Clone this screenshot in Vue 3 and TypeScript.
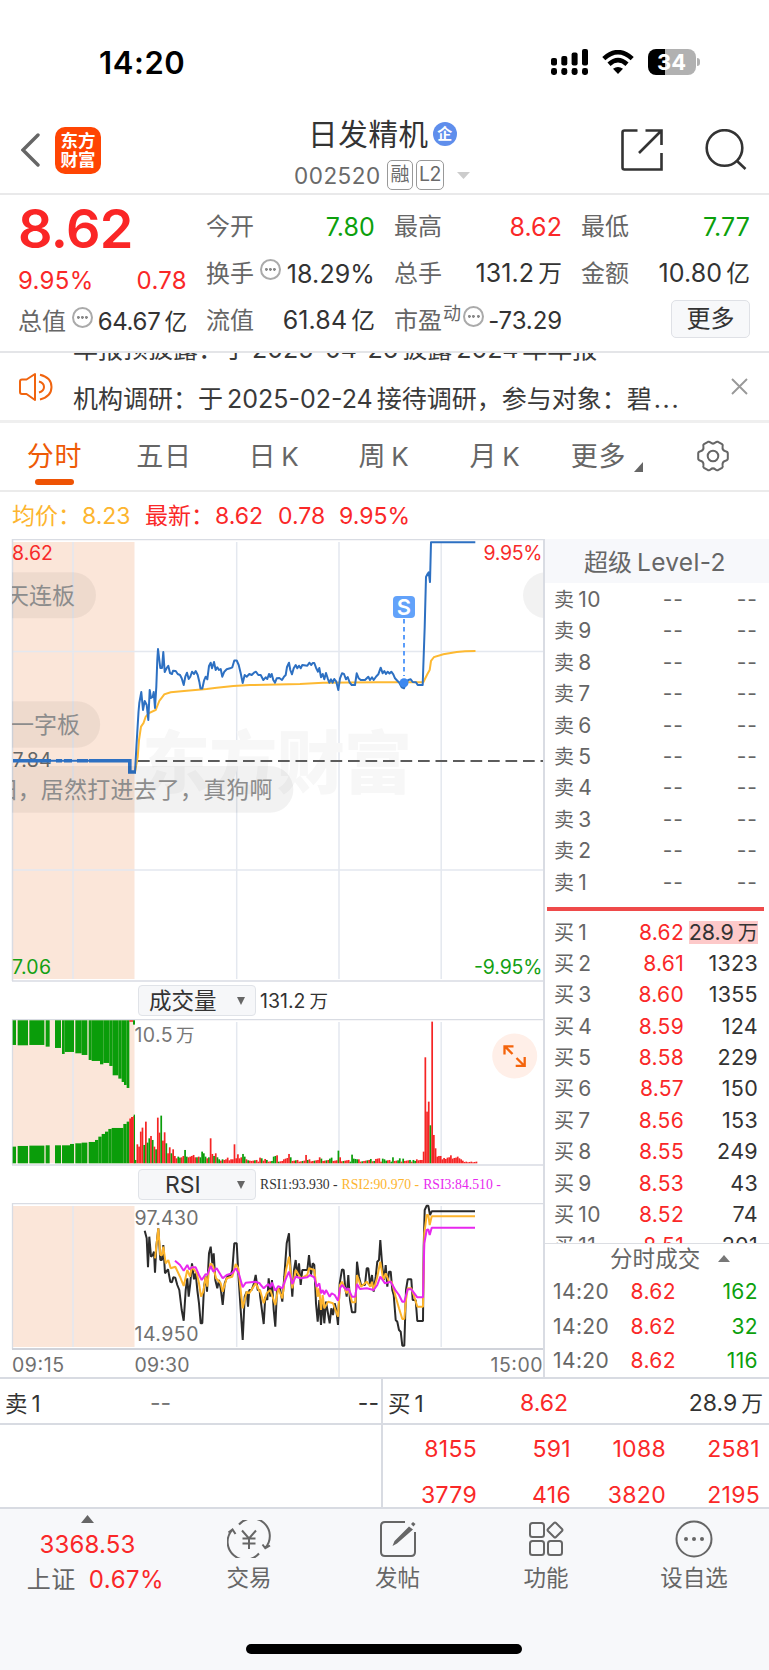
<script setup lang="ts">
type Pt = [number, number]

// Series are plotted on a grid of thirds of a pixel.
const line = (src: string, dx = 0, dy = 0): string =>
  src
    .trim()
    .split(/\s+/)
    .map((p) => p.split(',').map(Number) as Pt)
    .map(([x, y]) => `${(x / 3 + dx).toFixed(1)},${(y / 3 + dy).toFixed(1)}`)
    .join(' ')

const priceLine =
  '135,772 136.5,745 138.5,712 139.3,703 141.3,692 143,710 144.7,701 146.7,705 148.3,720 149.7,690 151,698 152.7,697 153.7,692 155,708 156.3,687 157.3,660 158,649 160.3,668 162,668 163.3,652 164.7,672 166.7,668 168.3,665.7 170,673 172,674 173,670.7 175.7,671 177.7,674 180,675 181.7,678.3 183.7,685 185.3,676.7 187,672.7 188.7,679 190.3,676.7 192,671.7 194,674 195.7,671 197.7,675 199.3,681.7 200.5,688.5 202.3,688.5 204,680.7 205.7,676.7 207.3,679.3 209,666 210.7,662.7 212,668.3 214,662 215.7,670 217.3,667.3 219,670 220.7,669 222.3,676.7 224.3,671.7 226.7,669.3 230,668.3 232.3,667.3 234.3,660.5 236.7,660.5 238.7,665 240.7,673.3 242.7,683 244.7,675 246.7,676.7 249.3,674 251.7,675 254,672.7 256,671.7 258.3,675 260.7,675 263.3,680 265.7,677.3 267.3,679 269,674 270.3,677 271.7,674 273.3,680 275,682.7 276.7,678.3 279.3,678 282,680 284,676.7 285.7,675 287,667 289,662.7 290.3,670 292,674.3 293.7,668.3 295.7,665 297.3,668.3 299,665.7 300.7,668.3 302.3,665 307.3,665.7 309.3,662.7 311.3,665 312.7,663 314.3,663 316,667.7 318,671.7 319.3,668 321,677.3 322.7,674 324.3,679.3 326,673 327.7,678.3 329.3,682.7 331,679.3 332.7,682.7 334.3,679 336.3,681.7 338.3,690 340,678.3 342,673.3 344,674 346,679.3 347.7,677 349.7,682.7 351.7,685 355,685 356.7,673.3 358.7,678.3 360.7,680 365,680 368.3,676.7 370,680 372,677.3 373.7,680 376,676.7 378.3,674.3 380.7,667.7 382.7,673.3 384.3,671 386,674 387.7,671.7 389.5,673.5 391.3,671.7 393.3,674.3 395,678.3 397.3,680.7 399.3,682.7 401.7,687.3 404,688.3 406,682.7 408.3,680 410.7,679.3 412.7,682 416,682.3 417.7,685 422.7,685 423.3,667 424.7,627 426,577 427.5,574 428.7,572.3 430,582 431,542.3 475.3,542.3'

const averageLine =
  '135,772 137.7,757 139,740 141,726.7 143.5,723 145.7,716.7 149,713 155.7,710 159.3,701 164.3,694.3 170.7,692.3 186.7,690.7 206.7,689 216.7,687.7 233.3,686 250,685 300,684 323,682.7 376.7,682.3 423.3,682.3 427.3,674.3 429.7,670 431,661 434,657 443.3,654.3 456.7,652 465,651.3 475.5,651'

const rsi1 = [
  line('434,752 440,775 444,862 448,770 453,830 458,825 462,815 465,878 469,800 475,745 481,840 486,840 490,795 495,880 504,868 511,905 516,907 520,892 526,893 532,915 538,930 545,990 551,1022 557,930 562,895 566,950 571,910 576,850 582,898 587,880 592,930 597,970 602,1030 607,1030 612,920 617,890 621,935 627,820 632,800 637,850 641,820 646,900 652,925 657,900 662,925 668,975 674,910 682,890 692,885 697,870 703,790 710,790 715,880 722,990 728,1080 734,950 740,935 744,980 748,930 755,930 762,910 767,885 773,930 779,930', 0, 980),
  line('0,945 5,985 11,1032 16,950 22,960 26,895 31,950 36,900 41,990 46,1040 51,930 60,925 67,965 73,890 80,790 87,760 92,880 97,950 102,870 107,840 112,890 117,850 122,915 127,870 142,870 147,825 153,885 158,850 163,855 168,970 173,1025 178,960 183,1035 188,960 193,1030 198,965 204,1000 209,1030 214,985 219,1005 224,970 229,990 234,1035 239,910 246,868 251,870 256,925 260,950 265,885 270,960 276,997 286,997 291,845 297,890 303,915 315,915 320,865 325,865 331,920 336,885 341,935 347,890 352,845 357,840 361,780 367,860 372,900 377,855 382,920 387,875 392,875 397,930 401,945 407,1020 412,1025 417,1050 422,1055 427,1097 433,1097 438,930 443,898 454,898 458,960 467,960 472,1023 489,1023 491,800 494,690 500,677 505,677 510,705 515,694 645,694', 260, 980)
].join(' ')

const rsi2 = [
  line('465,835 470,790 475,745 481,825 486,825 490,800 497,850 505,840 512,865 526,860 540,890 551,918 562,870 570,890 576,860 590,880 597,910 603,950 610,935 617,890 622,920 627,870 632,850 640,860 648,895 662,910 668,935 680,895 697,890 707,852 715,865 728,985 740,935 748,940 767,910 779,935', 0, 980),
  line('0,930 11,970 20,940 31,930 46,975 55,925 67,955 78,870 87,830 97,925 107,870 122,895 142,885 147,865 163,870 173,950 178,925 183,990 188,945 193,985 204,965 219,970 234,1010 240,915 246,905 260,940 266,925 276,967 286,967 291,885 303,920 320,905 331,920 336,905 341,930 352,890 361,845 370,900 377,880 387,905 395,905 407,950 417,985 427,1017 433,1017 438,960 443,925 454,925 463,950 472,980 489,980 493,760 500,705 505,705 509,735 515,709 645,709', 260, 980)
].join(' ')

const rsi3 = [
  line('525,842 540,855 551,872 562,855 568,868 576,862 587,862 597,885 605,900 617,882 622,885 632,858 640,875 650,865 668,895 680,885 697,880 707,865 716,880 728,922 737,908 767,905 779,910', 0, 980),
  line('0,912 11,925 25,912 31,922 36,908 46,932 55,918 67,925 78,895 87,875 97,912 107,890 122,895 142,892 150,885 163,892 170,920 178,910 183,940 188,930 193,943 198,930 209,950 215,940 224,945 234,962 240,925 246,915 260,930 265,925 276,950 286,950 291,912 300,927 320,925 341,930 352,915 361,890 375,910 392,905 407,932 417,945 427,965 433,965 443,928 454,928 463,940 472,952 489,952 493,790 500,750 505,748 509,765 515,743 645,743', 260, 980)
].join(' ')

// Minute volumes: height plus direction, one entry per minute from 09:30.
const opening =
  '10g 57r 50r 95r 107r 55g 125r 62g 75g 82r 70g 50r 42g 137r 92r 143g 68r 93r 60g 30r 48r 30g 42r 22r 15r 20g 17g 18r 22r 40g 20g 18r 20r 22r 25r 18r 18g 20r 18g 35g 30g 20g 15r 18g 75r 28r 22g 30r 18g 12g 8r 12g 10r 12r 17r 9r 12r 12r 57r 15r 27r 15r 18r 28g 20g 12r 9g 8r'.split(' ')
const spikes: Record<number, string> = {
  73: '17r', 74: '15g', 76: '13r', 81: '20g', 82: '22g', 83: '24r', 87: '12r', 88: '14r', 89: '16r', 90: '28r', 91: '18g', 100: '25r', 102: '12r',
  108: '18r', 109: '14g', 114: '14g', 115: '17g', 119: '38g', 120: '18r', 127: '26g', 128: '14g', 129: '13g', 130: '12g', 131: '12r', 138: '13g',
  141: '13r', 142: '14r', 143: '15r', 145: '14g', 146: '12g', 151: '18g', 155: '15g', 157: '14g', 163: '10g', 165: '12r', 168: '10r', 169: '35r',
  170: '318r', 171: '155r', 172: '185r', 173: '114g', 174: '425r', 175: '85r', 176: '45r', 177: '20r', 178: '22r', 179: '22r', 180: '12r',
  181: '16r', 182: '13r', 183: '17r', 184: '18r', 185: '24r', 186: '14r', 187: '16r', 188: '17r', 189: '20r', 190: '15r', 191: '12r', 192: '8r'
}
const volumes = Array.from({ length: 201 }, (_, i) => {
  const quiet = i > 192 ? `${3 + (i % 3)}r` : `${5 + ((i * 7) % 6)}${(i * 5) % 7 < 2 ? 'g' : 'r'}`
  const v = opening[i] ?? spikes[i] ?? quiet
  return { x: 134.8 + i * 1.704, h: parseInt(v) / 3, up: v.endsWith('r') }
})

// Call auction: [from, to, height] in thirds of a pixel.
const auctionTop = [
  [38, 48, 77], [53, 84, 78], [88, 133, 77], [137, 149, 82], [165, 183, 86], [186, 194, 104], [194, 222, 98], [226, 245, 102], [245, 262, 107],
  [266, 275, 122], [275, 300, 125], [300, 310, 135], [310, 328, 131], [328, 338, 140], [338, 355, 168], [355, 365, 178], [365, 372, 188], [372, 380, 197], [380, 388, 206], [399, 405, 16]
]
const auctionBottom = [
  [38, 48, 50], [53, 84, 52], [88, 133, 53], [137, 149, 54], [165, 183, 54], [186, 210, 54], [210, 222, 58], [226, 245, 60], [245, 262, 62],
  [266, 285, 64], [285, 295, 70], [295, 305, 80], [305, 315, 88], [315, 325, 95], [325, 335, 103], [335, 370, 106], [370, 380, 118], [380, 388, 125], [401, 405, 146]
]

const sells = [10, 9, 8, 7, 6, 5, 4, 3, 2, 1]
const buys = [
  ['1', '8.62', '28.9万'], ['2', '8.61', '1323'], ['3', '8.60', '1355'], ['4', '8.59', '124'], ['5', '8.58', '229'], ['6', '8.57', '150'],
  ['7', '8.56', '153'], ['8', '8.55', '249'], ['9', '8.53', '43'], ['10', '8.52', '74'], ['11', '8.51', '201']
]
const ticks = ['162', '32', '116']
const queue = [['8155', '591', '1088', '2581'], ['3779', '416', '3820', '2195']]
const tabs = ['日K', '周K', '月K']
</script>

<template>
  <div class="app">
    <div class="status">
      <span class="clock">14:20</span>
      <div class="status-icons">
        <svg width="37" height="26" viewBox="0 0 37 26">
          <rect x="0" y="9" width="6" height="7.5" rx="2" /><rect x="10.3" y="7" width="6" height="9.5" rx="2" />
          <rect x="20.6" y="3.5" width="6" height="13" rx="2" /><rect x="31" y="0" width="6" height="16.5" rx="2" />
          <rect v-for="x in [0, 10.3, 20.6, 31]" :key="x" :x="x" y="19" width="6" height="7" rx="2.4" />
        </svg>
        <svg class="wifi" width="32" height="24" viewBox="0 0 32 24">
          <path d="M1.8 8.6Q16-4.2 30.2 8.6M7 14.2Q16 6 25 14.2" fill="none" stroke="#000" stroke-width="4.6" />
          <path d="M16 24l-5-5.2q5-3.6 10 0z" />
        </svg>
        <div class="battery"><span>34</span></div>
        <i class="tip"></i>
      </div>
    </div>

    <header class="head">
      <div class="head-left">
        <svg width="19" height="34" viewBox="0 0 19 34"><path d="M17 2L2 17 17 32" fill="none" stroke="#666" stroke-width="3.4" stroke-linecap="round" /></svg>
        <div class="logo"><span>东方</span><span>财富</span></div>
      </div>
      <div class="head-mid">
        <div class="name">日发精机<b>企</b></div>
        <div class="code"><span>002520</span><i>融</i><i class="l2">L2</i>
          <svg width="13" height="7" viewBox="0 0 13 7"><path d="M0 0h13L6.500 7z" fill="#ccc" /></svg>
        </div>
      </div>
      <div class="head-right">
        <svg width="42" height="42" viewBox="0 0 42 42" fill="none" stroke="#333" stroke-width="2.6">
          <path d="M16.500 1.500H3.500Q1.500 1.500 1.500 3.500V38.500Q1.500 40.500 3.500 40.500H40.500V24M24.500 1.500H40.500V16M40 2L18 24" />
        </svg>
        <svg width="42" height="42" viewBox="0 0 42 42" fill="none" stroke="#333" stroke-width="2.6">
          <circle cx="19.500" cy="19" r="17.800" /><path d="M31.500 31.500l9 8.500" />
        </svg>
      </div>
    </header>

    <section class="quote">
      <div class="main-quote">
        <div class="big">8.62</div>
        <div class="cell red"><span>9.95%</span><span>0.78</span></div>
        <div class="cell"><label>总值</label><i class="dots"></i><span class="tight">64.67<em>亿</em></span></div>
      </div>
      <div class="quote-grid">
        <div class="cell"><label>今开</label><span class="green">7.80</span></div>
        <div class="cell"><label>最高</label><span class="red">8.62</span></div>
        <div class="cell"><label>最低</label><span class="green">7.77</span></div>
        <div class="cell"><label>换手</label><i class="dots"></i><span class="tight">18.29%</span></div>
        <div class="cell"><label>总手</label><span>131.2<em>万</em></span></div>
        <div class="cell"><label>金额</label><span>10.80<em>亿</em></span></div>
        <div class="cell"><label>流值</label><span>61.84<em>亿</em></span></div>
        <div class="cell"><label>市盈</label><sup>动</sup><i class="dots"></i><span class="tight pe">-73.29</span></div>
        <div class="cell end"><button>更多</button></div>
      </div>
    </section>

    <section class="news">
      <svg class="horn" width="34" height="30" viewBox="0 0 34 30" fill="none" stroke="#f0640f" stroke-width="2" stroke-linejoin="round">
        <path d="M16 2v26L7.500 22H3q-2 0-2-2V9.500q0-2 2-2h4.500z" /><path d="M20 9.500q5 1.500 5 5.500t-5 5.500M21 2.800Q32.500 5.500 32.500 15T21 27.500" />
      </svg>
      <div class="news-text">
        <p>年报预披露：于<u>2025-04-26</u>披露<u>2024</u>年年报</p>
        <p>机构调研：于<u>2025-02-24</u>接待调研，参与对象：碧<span class="more">...</span></p>
      </div>
      <svg width="17" height="17" viewBox="0 0 17 17"><path d="M1 1l15 15M16 1L1 16" stroke="#999" stroke-width="1.900" /></svg>
    </section>

    <nav class="tabs">
      <span class="on">分时</span>
      <span>五日</span>
      <span v-for="t in tabs" :key="t">{{ t[0] }}<u>{{ t[1] }}</u></span>
      <span>更多<svg width="9" height="10" viewBox="0 0 9 10"><path d="M9 0v10H0z" fill="#666" /></svg></span>
      <svg class="gear" width="32" height="32" viewBox="0 0 32 32" fill="none" stroke="#666" stroke-width="2">
        <circle cx="16" cy="16" r="5.300" />
        <path d="M11 1.800Q12.500 1.300 13.500 2.600Q16 4.700 18.500 2.600Q19.500 1.300 21 1.800L25 4.100Q26.200 5 25.600 6.600Q25 10.300 28.600 11.300Q30.800 11.700 30.800 13.500V18.500Q30.800 20.300 28.600 20.700Q25 21.700 25.600 25.400Q26.200 27 25 27.900L21 30.200Q19.500 30.700 18.500 29.400Q16 27.300 13.500 29.400Q12.500 30.700 11 30.200L7 27.900Q5.800 27 6.400 25.400Q7 21.700 3.400 20.700Q1.200 20.300 1.200 18.500V13.500Q1.200 11.700 3.400 11.300Q7 10.300 6.400 6.600Q5.800 5 7 4.100z" />
      </svg>
    </nav>

    <div class="legend">
      <span class="gold">均价：</span><span class="gold v1">8.23</span><span class="red">最新：</span><span class="red v2">8.62</span>
      <span class="red v3">0.78</span><span class="red">9.95%</span>
    </div>

    <div class="body">
      <div class="charts">
        <svg class="chart" width="543" height="443" viewBox="0 539 543 443">
          <rect x="12.500" y="542" width="122" height="437" fill="#fbe6d9" />
          <g stroke="#e4e8ef" stroke-width="1.500">
            <path d="M73 542V979M236.700 542V979M339 542V979M441.200 542V979M12 651.500H544M12 870H544" />
          </g>
          <path d="M12.500 981V539.500H544M12 981H544" fill="none" stroke="#d9dce3" stroke-width="1.500" />
          <text class="mark" x="142" y="788" textLength="270">东方财富</text>
          <path d="M138 761H544" stroke="#5c5c5c" stroke-width="2" stroke-dasharray="11.700 5.800" />
          <text x="12.500" y="767" font-size="19.500" textLength="39" fill="#666">7.84</text>
          <polyline :points="averageLine" fill="none" stroke="#fdb932" stroke-width="2" />
          <path d="M13 760.700H129.800V772H135" fill="none" stroke="#2d70c2" stroke-width="2" />
          <path d="M13 760.700H51M56 760.700H62M64 760.700H72M77 760.700H88M89 760.700H129.800V772H136" fill="none" stroke="#2d70c2" stroke-width="3.600" />
          <polyline :points="priceLine" fill="none" stroke="#2d70c2" stroke-width="2" stroke-linejoin="round" />
          <path d="M404 619V676" stroke="#5b9dfa" stroke-width="2" stroke-dasharray="4.500 3.500" />
          <circle cx="404" cy="682.700" r="4.500" fill="#3b87f0" />
          <rect x="393" y="596" width="22" height="22" rx="4" fill="#62a2fa" />
          <text x="404" y="614.500" font-size="22" font-weight="600" fill="#fff" text-anchor="middle">S</text>
          <g fill="#000" fill-opacity=".05">
            <path d="M12 572.300H73a23 23 0 0 1 0 46H12zM546 572.300a23 23 0 0 0 0 46zM12 701.300H77a23 23 0 0 1 0 46.400H12zM12 766H270a23 23 0 0 1 0 46.800H12z" />
          </g>
          <svg x="12" y="540" width="530" height="300" viewBox="12 540 530 300">
            <g fill="#8c8c8c" font-size="23" text-anchor="end">
              <text x="75" y="604" textLength="69">天连板</text>
              <text x="80" y="733" textLength="69">一字板</text>
              <text x="272.500" y="798" textLength="278">旧，居然打进去了，真狗啊</text>
            </g>
          </svg>
          <text x="12" y="559.500" font-size="19.500" textLength="41" fill="#f82a2a">8.62</text>
          <text x="542.500" y="559.500" font-size="19.500" textLength="59" text-anchor="end" fill="#f82a2a">9.95%</text>
          <text x="12" y="974" font-size="19.500" textLength="39" fill="#13a013">7.06</text>
          <text x="542.500" y="974" font-size="19.500" textLength="68.500" text-anchor="end" fill="#13a013">-9.95%</text>
        </svg>

        <div class="indicator">
          <div class="pick">成交量<svg width="8" height="8" viewBox="0 0 8 8"><path d="M0 0h8L4 8z" /></svg></div>
          <span class="total">131.2<em>万</em></span>
        </div>
        <svg class="chart" width="543" height="147" viewBox="0 1019 543 147">
          <rect x="12.500" y="1020" width="122" height="143.300" fill="#fbe6d9" />
          <path d="M73 1022V1163M236.700 1022V1163M339 1022V1163M441.200 1022V1163" stroke="#e4e8ef" stroke-width="1.500" />
          <path d="M12.500 1165V1019.500H544M12 1165H544" fill="none" stroke="#d9dce3" stroke-width="1.300" />
          <g fill="#0a9d0a">
            <rect v-for="b in auctionTop" :key="'t' + b[0]" :x="b[0] / 3" y="1020.300" :width="(b[1] - b[0]) / 3" :height="b[2] / 3 - 1" />
            <rect v-for="b in auctionBottom" :key="'b' + b[0]" :x="b[0] / 3" :y="1163.300 - b[2] / 3" :width="(b[1] - b[0]) / 3" :height="b[2] / 3" />
          </g>
          <path d="M129.300 1020.300h3.700v1.400h-3.700zM129.300 1163.300V1118.500h1.700V1117h2v-1h.800V1163.300z" fill="#f52525" />
          <rect v-for="(v, i) in volumes" :key="i" :x="v.x" :y="1163.300 - v.h" width="1.720" :height="v.h" :fill="v.up ? '#f52525' : '#0a9d0a'" />
          <text x="134.500" y="1041.500" font-size="19.500" fill="#777" textLength="38">10.5</text>
          <text x="176" y="1041.500" font-size="18.500" fill="#777">万</text>
          <circle cx="514.700" cy="1056" r="22.500" fill="#ffefe8" />
          <path d="M512.500 1054L505 1046.500M504.500 1054.500V1046.300H513.500M516.500 1058L524 1065.500M524.700 1057V1065.800H515.700" fill="none" stroke="#f4640c" stroke-width="2.300" />
        </svg>

        <div class="indicator">
          <div class="pick rsi">RSI<svg width="8" height="8" viewBox="0 0 8 8"><path d="M0 0h8L4 8z" /></svg></div>
          <div class="rsi-values"><span>RSI1:93.930 -</span><span class="gold">RSI2:90.970 -</span><span class="pink">RSI3:84.510 -</span></div>
        </div>
        <svg class="chart" width="543" height="174" viewBox="0 1203 543 174">
          <rect x="12.500" y="1206" width="122" height="141" fill="#fbe6d9" />
          <path d="M73 1206V1347M236.700 1206V1347M339 1206V1378M441.200 1206V1347" stroke="#e4e8ef" stroke-width="1.500" />
          <path d="M12.500 1349V1203.500H544" fill="none" stroke="#d9dce3" stroke-width="1.300" />
          <path d="M12 1349H544" stroke="#d0d3da" stroke-width="2" />
          <g fill="none" stroke-width="2" stroke-linejoin="bevel">
            <polyline :points="rsi1" stroke="#2b2b2b" />
            <polyline :points="rsi2" stroke="#fdb42c" />
            <polyline :points="rsi3" stroke="#e728ee" />
          </g>
          <g font-size="19.500" fill="#707070">
            <text x="134.500" y="1225" textLength="64">97.430</text>
            <text x="134.500" y="1340.500" textLength="64">14.950</text>
            <text x="12" y="1371.500" textLength="52">09:15</text>
            <text x="134.500" y="1371.500" textLength="55">09:30</text>
            <text x="542.500" y="1371.500" textLength="52" text-anchor="end">15:00</text>
          </g>
        </svg>
      </div>

      <aside class="book">
        <div class="book-title">超级<u>Level-2</u></div>
        <div class="rows">
          <div v-for="n in sells" :key="n" class="row"><label>卖<u>{{ n }}</u></label><span class="p none">--</span><span class="none">--</span></div>
        </div>
        <div class="split"></div>
        <div class="rows buys">
          <div v-for="b in buys" :key="b[0]" class="row" :class="{ first: b[0] === '1' }">
            <label>买<u>{{ b[0] }}</u></label><span class="p red">{{ b[1] }}</span><span class="q"><template v-if="b[0] === '1'">28.9<em>万</em></template><template v-else>{{ b[2] }}</template></span>
          </div>
        </div>
        <div class="ticks">
          <div class="ticks-title">分时成交<svg width="12" height="7" viewBox="0 0 12 7"><path d="M6 0l6 7H0z" fill="#777" /></svg></div>
          <div v-for="t in ticks" :key="t" class="tick"><span>14:20</span><span class="red">8.62</span><span class="green">{{ t }}</span></div>
        </div>
      </aside>
    </div>

    <section class="depth">
      <div class="side">
        <div class="best"><span class="lbl">卖<u>1</u></span><span class="price grey">--</span><span>--</span></div>
      </div>
      <div class="side buy">
        <div class="best"><span class="lbl">买<u>1</u></span><span class="price red">8.62</span><span>28.9<em>万</em></span></div>
        <div v-for="(r, i) in queue" :key="i" class="orders"><span v-for="v in r" :key="v">{{ v }}</span></div>
      </div>
    </section>

    <footer class="foot">
      <div class="index">
        <svg width="13" height="8" viewBox="0 0 13 8"><path d="M6.500 0L13 8H0z" fill="#666" /></svg>
        <div class="red">3368.53</div>
        <div class="sh"><label>上证</label><span class="red">0.67%</span></div>
      </div>
      <div class="item">
        <svg width="44" height="38" viewBox="0 0 44 38" fill="none" stroke="#666" stroke-width="2">
          <path d="M12 4.500A17.500 17.500 0 0 1 38.500 27.500M32 33.500A17.500 17.500 0 0 1 5 10M1.500 12.500L5.500 9.500 8.500 14M35.500 24.500L38.300 28.300 43 25.500M15 10.500l7 8 7-8M22 18.500V29M15.500 18.500h13M15.500 23.500h13" />
        </svg><span>交易</span>
      </div>
      <div class="item">
        <svg width="38" height="38" viewBox="0 0 38 38" fill="none" stroke="#666" stroke-width="2">
          <path d="M26 2H6Q2 2 2 6V32Q2 36 6 36H32Q36 36 36 32V12" />
          <path d="M30 6.500l4 3L18 23.500l-4.500 2.500 2-5zM32 4l2-2 2.500 2-2 2.500z" fill="#666" stroke="none" />
        </svg><span>发帖</span>
      </div>
      <div class="item">
        <svg width="36" height="38" viewBox="0 0 36 38" fill="none" stroke="#666" stroke-width="2">
          <rect x="2" y="3" width="14" height="14" rx="2.500" /><rect x="2" y="21" width="14" height="14" rx="2.500" /><rect x="20" y="21" width="14" height="14" rx="2.500" />
          <path d="M26 3q1-1 2 0l6 6q1 1 0 2l-6 6q-1 1-2 0l-6-6q-1-1 0-2z" />
        </svg><span>功能</span>
      </div>
      <div class="item">
        <svg width="38" height="38" viewBox="0 0 38 38" fill="none" stroke="#666" stroke-width="2">
          <circle cx="19" cy="19" r="17.500" /><g fill="#666" stroke="none"><circle cx="11" cy="19" r="2" /><circle cx="19" cy="19" r="2" /><circle cx="27" cy="19" r="2" /></g>
        </svg><span>设自选</span>
      </div>
      <div class="home"></div>
    </footer>
  </div>
</template>

<style>
body { background: #fff; }
</style>

<style scoped>
* { box-sizing: border-box; }
.app {
  width: 769px; height: 1670px; overflow: hidden; background: #fff; color: #333;
  font-family: Inter, "Noto Sans CJK SC", sans-serif; font-size: 24px;
}
svg { display: block; flex: none; }
svg text { font-family: Inter, "Noto Sans CJK SC", sans-serif; }
u, i, em { text-decoration: none; font-style: normal; }
em { margin-left: 4px; font-size: .95em; }
.red { color: #fa2828; }
.green { color: #0ca00c; }
.gold { color: #fdb52f; }
.pink { color: #e728ee; }
.grey { color: #777; }

.status { height: 106px; display: flex; justify-content: space-between; padding: 0 69px 0 99px; }
.clock { font-size: 31px; font-weight: 600; color: #000; line-height: 40px; margin-top: 43px; letter-spacing: .6px; }
.status-icons { display: flex; align-items: flex-start; padding-top: 49px; }
.wifi { margin: 1px 14px 0 14px; }
.battery {
  width: 48px; height: 26px; border-radius: 8px; color: #fff; font-size: 22px; font-weight: 700;
  line-height: 27px; text-align: center; background: linear-gradient(90deg, #000 17px, #b1b1b1 17px);
}
.tip { width: 3px; height: 8px; margin: 9px 0 0 1.500px; background: #b1b1b1; border-radius: 0 3px 3px 0; }

.head { height: 89px; display: grid; grid-template-columns: 250px 1fr 250px; border-bottom: 2px solid #e9e9ea; }
.head-left { display: flex; align-items: center; padding: 0 0 0 21px; gap: 15px; height: 88px; }
.logo {
  width: 46px; height: 47px; border-radius: 10px; background: #ff4503; color: #fff; font-size: 17.500px; font-weight: 700;
  line-height: 19.500px; display: flex; flex-direction: column; align-items: center; justify-content: center;
}
.head-mid { padding-left: 44px; }
.name { margin: 8px 0 0 14px; font-size: 29.500px; line-height: 40px; height: 40px; display: flex; align-items: center; letter-spacing: .7px; white-space: nowrap; }
.name b {
  width: 24px; height: 24px; margin-left: 4px; border-radius: 50%; background: #5f8eec; color: #fff; font-size: 15px;
  line-height: 23px; text-align: center; letter-spacing: 0;
}
.code { display: flex; align-items: center; height: 32px; margin-top: 5px; color: #6a6a6a; font-size: 22.500px; }
.code span { letter-spacing: .5px; width: 93px; }
.code i { width: 26px; height: 30px; border: 1.500px solid #999; border-radius: 5px; font-size: 19px; line-height: 27px; text-align: center; }
.code i.l2 { width: 28px; margin-left: 3px; font-size: 19.500px; letter-spacing: -.5px; }
.code svg { margin-left: 13px; }
.head-right { display: flex; justify-content: flex-end; gap: 42px; padding: 23px 24px 0 0; }
.head-right svg:last-child { margin-right: -2px; }

.quote { height: 158px; display: flex; padding-left: 18px; border-bottom: 2px solid #e4e5e8; }
.main-quote { width: 169px; margin-right: 19px; }
.big { height: 66px; font-size: 54px; line-height: 68px; font-weight: 600; color: #fa2626; letter-spacing: -.6px; }
.cell { display: flex; justify-content: space-between; align-items: center; height: 47px; font-size: 25px; white-space: nowrap; line-height: 30px; letter-spacing: .1px; }
.main-quote .cell { height: 39px; font-size: 24px; letter-spacing: .3px; }
.main-quote .cell:last-child { height: 43px; letter-spacing: -.3px; }
.cell label { font-size: 24px; color: #666; letter-spacing: 0; }
.quote-grid { display: grid; grid-template-columns: 169px 168px 169px; column-gap: 19px; grid-auto-rows: 47px; margin-top: 8px; }
.dots {
  width: 21px; height: 21px; margin: -8px 0 0 6px; border: 2px solid #aaa; border-radius: 50%; flex: none;
  background: radial-gradient(circle at 50% 50%, #888 1.100px, transparent 1.700px) center / 4.800px 4.800px no-repeat,
    radial-gradient(circle at 50% 50%, #888 1.100px, transparent 1.700px) 2px center / 4.800px 4.800px no-repeat,
    radial-gradient(circle at 50% 50%, #888 1.100px, transparent 1.700px) 10.400px center / 4.800px 4.800px no-repeat;
}
.tight { margin-left: auto; }
.pe { font-size: 24px; letter-spacing: -.1px; }
sup { font-size: 18px; line-height: 20px; margin: -14px 0 0 1px; color: #666; }
sup + .dots { margin-left: 2px; }
.end { justify-content: flex-end; }
button {
  width: 79px; height: 38px; padding: 0; border: 1.500px solid #dfe1e6; border-radius: 5px; background: #f7f8fa;
  color: #333; font: 24px/34px Inter, "Noto Sans CJK SC", sans-serif; margin-top: -3px;
}

.news { height: 70px; display: flex; border-bottom: 3px solid #efefef; padding-left: 19px; overflow: hidden; }
.horn { margin: 19px 20px 0 0; }
.news-text { width: 640px; margin-right: 18px; height: 67px; overflow: hidden; font-size: 25px; color: #3a3a3a; white-space: nowrap; }
.news-text p { margin: 0; height: 50px; line-height: 50px; }
.news-text p:first-child { margin-top: -29px; }
.news-text u { margin: 0 4px; }
.more { letter-spacing: 1.700px; margin-left: 2px; }
.news > svg:last-child { margin-top: 25px; }

.tabs { height: 69px; display: grid; grid-template-columns: 109px 110px 110px 110px 112px 112px 1fr; border-bottom: 2px solid #ebebeb; color: #666; font-size: 27px; line-height: 68px; }
.tabs > span { display: flex; justify-content: center; align-items: center; position: relative; letter-spacing: .8px; }
.tabs u { margin-left: 5px; font-size: 26px; }
.tabs > span svg { margin: 19px 0 0 8px; }
.on { color: #ee5a06; }
.on::after { content: ""; position: absolute; left: 35px; top: 56px; width: 39px; height: 6px; border-radius: 3px; background: #ee5304; }
.gear { margin: 17px 0 0 34px; }

.legend { height: 47px; padding-left: 12px; display: flex; align-items: center; font-size: 23px; line-height: 30px; white-space: nowrap; padding-top: 1px; }
.legend .gold:first-child { width: 70px; }
.v1 { width: 63px; }
.legend > :nth-child(3) { width: 70px; }
.v2 { width: 63px; }
.v3 { width: 61px; }

.body { display: flex; height: 838px; }
.charts { width: 543px; flex: none; }
.mark { font-size: 68px; font-weight: 900; fill: #f7f7f7; }
.indicator { height: 37px; display: flex; align-items: center; padding-left: 138px; }
.pick {
  width: 118px; height: 31px; border: 1.500px solid #e0e3e8; border-radius: 4px; background: #f6f7f9; font-size: 22.500px;
  line-height: 28px; display: flex; align-items: center; justify-content: space-between; padding: 0 10px;
}
.pick.rsi { padding-left: 26px; font-size: 23px; }
.pick svg { fill: #666; }
.total { margin-left: 4px; font-size: 19.500px; line-height: 24px; }
.rsi-values { display: flex; gap: 4px; margin-left: 4px; font: 13.700px/20px "Liberation Serif", serif; white-space: nowrap; }

.book { width: 226px; border-left: 2px solid #d9dce3; height: 838px; display: flex; flex-direction: column; }
.book-title { height: 44px; background: #f7f8fb; color: #666; font-size: 24px; line-height: 47px; padding-left: 39px; }
.book-title u { margin-left: 5px; font-size: 24.500px; letter-spacing: .3px; }
.rows { height: 314px; padding: 1px 11px 0 9px; overflow: hidden; font-size: 21px; letter-spacing: .3px; color: #666; }
.row { display: grid; grid-template-columns: 70px 60px 1fr; height: 31.400px; line-height: 31.400px; text-align: right; white-space: nowrap; }
.row label { text-align: left; font-size: 20px; }
.row u { margin-left: 4px; font-size: 21px; }
.none { letter-spacing: 1px; }
.split { height: 4px; flex: none; width: 217px; margin: 10px 0 0 2px; background: #ef4a4a; }
.buys { height: 333px; flex: none; padding-top: 5.500px; border-bottom: 1px solid #dcdee3; }
.q { color: #333; font-size: 21.500px; }
.first .q { justify-self: end; background: #fdc9c9; height: 23px; line-height: 23px; margin-top: 4px; letter-spacing: -.1px; }
.ticks { flex: 1; overflow: hidden; color: #666; font-size: 21px; letter-spacing: .4px; }
.ticks-title { display: flex; align-items: center; height: 31px; padding-left: 65px; font-size: 22.500px; line-height: 28px; padding-bottom: 2px; letter-spacing: .1px; }
.ticks-title svg { margin-left: 18px; }
.tick { display: grid; grid-template-columns: 60px 63px 1fr; height: 34.500px; line-height: 34.500px; text-align: right; padding: 0 11px 0 8px; }
.tick span:first-child { text-align: left; }

.depth { height: 132px; display: flex; border-top: 2px solid #d8dbe2; border-bottom: 2px solid #d8dbe2; overflow: hidden; font-size: 23px; }
.side { width: 381px; flex: none; }
.side.buy { width: 388px; border-left: 2px solid #d8dbe2; }
.best { height: 46px; border-bottom: 2px solid #d8dbe2; display: grid; grid-template-columns: 60px 1fr 100px; line-height: 49px; padding: 0 2px 0 5px; text-align: right; white-space: nowrap; }
.buy .best { padding-right: 6px; }
.lbl { text-align: left; font-size: 22.500px; }
.lbl u { margin-left: 4px; }
.price { text-align: left; padding-left: 85px; }
.buy .price { padding-left: 72px; }
.orders { display: grid; grid-template-columns: 94px 94px 95px 94px; height: 46px; line-height: 49px; text-align: right; color: #fa2828; letter-spacing: .3px; }

.foot { height: 161px; background: #f7f8fa; display: grid; grid-template-columns: 175px 148px 149px 148px 148px; grid-template-rows: 135px 26px; color: #666; }
.index { display: flex; flex-direction: column; align-items: center; padding-top: 6px; font-size: 24.500px; }
.index > .red { margin-top: 7px; line-height: 30px; font-size: 24px; letter-spacing: .2px; }
.sh { display: flex; gap: 13px; margin: 4px 0 0 16px; line-height: 32px; font-size: 24px; letter-spacing: .5px; }
.item { display: flex; flex-direction: column; align-items: center; padding-top: 11px; font-size: 22.500px; }
.item span { line-height: 30px; margin-top: 5px; }
.home { grid-column: 1 / -1; justify-self: center; width: 276px; height: 10px; border-radius: 5px; background: #000; }
</style>
